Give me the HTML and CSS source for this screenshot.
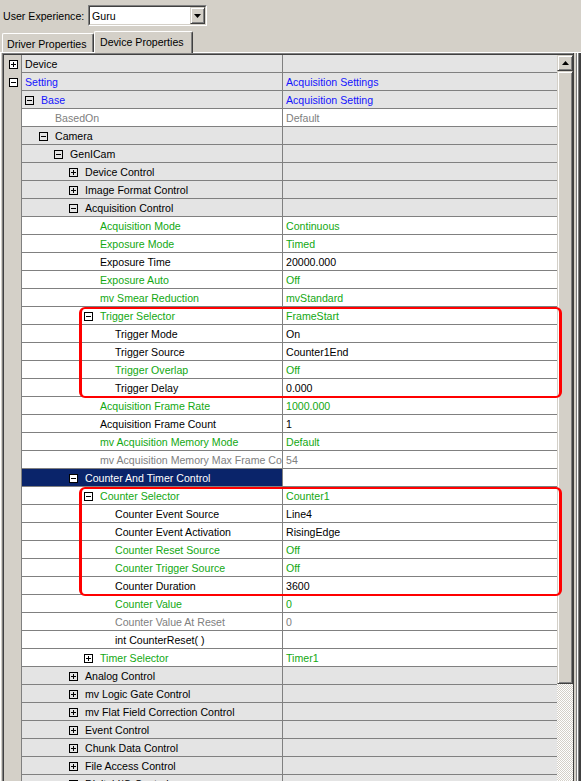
FILE: index.html
```html
<!DOCTYPE html>
<html>
<head>
<meta charset="utf-8">
<link rel="stylesheet" href="styles.css">
</head>
<body>
<div class="top">
  <div class="label">User Experience:</div>
  <div class="combo"><div class="combo-in"><span class="combo-text">Guru</span><span class="drop"><svg width="7" height="4" viewBox="0 0 7 4"><polygon points="0,0 7,0 3.5,4" fill="#000"/></svg></span></div></div>
</div>
<div class="tabs">
  <div class="tab tab1">Driver Properties</div>
  <div class="tab tab2">Device Properties</div>
</div>
<div class="panel">
  <div class="view"><div class="view-in">
    <div class="tree">
      <div class="row cat"><div class="gut"><i class="exp plus"></i></div><div class="nm l0">Device</div><div class="vl"></div></div>
      <div class="row cat"><div class="gut"><i class="exp"></i></div><div class="nm l0 b">Setting</div><div class="vl b">Acquisition Settings</div></div>
      <div class="row cat"><div class="gut"></div><div class="nm e1 b"><i class="exp"></i>Base</div><div class="vl b">Acquisition Setting</div></div>
      <div class="row"><div class="gut"></div><div class="nm l2 gr">BasedOn</div><div class="vl gr">Default</div></div>
      <div class="row cat"><div class="gut"></div><div class="nm e2"><i class="exp"></i>Camera</div><div class="vl"></div></div>
      <div class="row cat"><div class="gut"></div><div class="nm e3"><i class="exp"></i>GenICam</div><div class="vl"></div></div>
      <div class="row cat"><div class="gut"></div><div class="nm e4"><i class="exp plus"></i>Device Control</div><div class="vl"></div></div>
      <div class="row cat"><div class="gut"></div><div class="nm e4"><i class="exp plus"></i>Image Format Control</div><div class="vl"></div></div>
      <div class="row cat"><div class="gut"></div><div class="nm e4"><i class="exp"></i>Acquisition Control</div><div class="vl"></div></div>
      <div class="row"><div class="gut"></div><div class="nm l5 g">Acquisition Mode</div><div class="vl g">Continuous</div></div>
      <div class="row"><div class="gut"></div><div class="nm l5 g">Exposure Mode</div><div class="vl g">Timed</div></div>
      <div class="row"><div class="gut"></div><div class="nm l5">Exposure Time</div><div class="vl">20000.000</div></div>
      <div class="row"><div class="gut"></div><div class="nm l5 g">Exposure Auto</div><div class="vl g">Off</div></div>
      <div class="row"><div class="gut"></div><div class="nm l5 g">mv Smear Reduction</div><div class="vl g">mvStandard</div></div>
      <div class="hl">
        <div class="row"><div class="gut"></div><div class="nm e5 g"><i class="exp"></i>Trigger Selector</div><div class="vl g">FrameStart</div></div>
        <div class="row"><div class="gut"></div><div class="nm l6">Trigger Mode</div><div class="vl">On</div></div>
        <div class="row"><div class="gut"></div><div class="nm l6">Trigger Source</div><div class="vl">Counter1End</div></div>
        <div class="row"><div class="gut"></div><div class="nm l6 g">Trigger Overlap</div><div class="vl g">Off</div></div>
        <div class="row"><div class="gut"></div><div class="nm l6">Trigger Delay</div><div class="vl">0.000</div></div>
      </div>
      <div class="row"><div class="gut"></div><div class="nm l5 g">Acquisition Frame Rate</div><div class="vl g">1000.000</div></div>
      <div class="row"><div class="gut"></div><div class="nm l5">Acquisition Frame Count</div><div class="vl">1</div></div>
      <div class="row"><div class="gut"></div><div class="nm l5 g">mv Acquisition Memory Mode</div><div class="vl g">Default</div></div>
      <div class="row"><div class="gut"></div><div class="nm l5 gr">mv Acquisition Memory Max Frame Count</div><div class="vl gr">54</div></div>
      <div class="row sel"><div class="gut"></div><div class="nm e4"><i class="exp"></i>Counter And Timer Control</div><div class="vl"></div></div>
      <div class="hl">
        <div class="row"><div class="gut"></div><div class="nm e5 g"><i class="exp"></i>Counter Selector</div><div class="vl g">Counter1</div></div>
        <div class="row"><div class="gut"></div><div class="nm l6">Counter Event Source</div><div class="vl">Line4</div></div>
        <div class="row"><div class="gut"></div><div class="nm l6">Counter Event Activation</div><div class="vl">RisingEdge</div></div>
        <div class="row"><div class="gut"></div><div class="nm l6 g">Counter Reset Source</div><div class="vl g">Off</div></div>
        <div class="row"><div class="gut"></div><div class="nm l6 g">Counter Trigger Source</div><div class="vl g">Off</div></div>
        <div class="row"><div class="gut"></div><div class="nm l6">Counter Duration</div><div class="vl">3600</div></div>
      </div>
      <div class="row"><div class="gut"></div><div class="nm l6 g">Counter Value</div><div class="vl g">0</div></div>
      <div class="row"><div class="gut"></div><div class="nm l6 gr">Counter Value At Reset</div><div class="vl gr">0</div></div>
      <div class="row"><div class="gut"></div><div class="nm l6">int CounterReset( )</div><div class="vl"></div></div>
      <div class="row"><div class="gut"></div><div class="nm e5 g"><i class="exp plus"></i>Timer Selector</div><div class="vl g">Timer1</div></div>
      <div class="row cat"><div class="gut"></div><div class="nm e4"><i class="exp plus"></i>Analog Control</div><div class="vl"></div></div>
      <div class="row cat"><div class="gut"></div><div class="nm e4"><i class="exp plus"></i>mv Logic Gate Control</div><div class="vl"></div></div>
      <div class="row cat"><div class="gut"></div><div class="nm e4"><i class="exp plus"></i>mv Flat Field Correction Control</div><div class="vl"></div></div>
      <div class="row cat"><div class="gut"></div><div class="nm e4"><i class="exp plus"></i>Event Control</div><div class="vl"></div></div>
      <div class="row cat"><div class="gut"></div><div class="nm e4"><i class="exp plus"></i>Chunk Data Control</div><div class="vl"></div></div>
      <div class="row cat"><div class="gut"></div><div class="nm e4"><i class="exp plus"></i>File Access Control</div><div class="vl"></div></div>
      <div class="row cat"><div class="gut"></div><div class="nm e4"><i class="exp plus"></i>Digital I/O Control</div><div class="vl"></div></div>
    </div>
    <div class="vscroll">
      <div class="sb-btn"><svg width="7" height="4" viewBox="0 0 7 4"><polygon points="3.5,0 7,4 0,4" fill="#000"/></svg></div>
      <div class="sb-thumb"></div>
      <div class="sb-track"></div>
    </div>
  </div></div>
  <div class="frame-r"></div>
</div>
</body>
</html>
```
FILE: styles.css
```css
html, body {
  margin: 0;
  height: 781px;
  overflow: hidden;
}
body {
  background: #d4d0c8;
  font-family: "Liberation Sans", Arial, sans-serif;
  font-size: 10.6px;
  color: #000;
}
.top {
  display: flex;
  align-items: center;
  height: 21px;
  padding: 5px 0 5px 3px;
}
.label {
  width: 85px;
  flex: none;
}
.combo {
  width: 119px;
  height: 21px;
  box-sizing: border-box;
  border: 1px solid;
  border-color: #808080 #fff #fff #808080;
  display: flex;
}
.combo-in {
  flex: 1;
  display: flex;
  align-items: center;
  justify-content: space-between;
  border: 1px solid;
  border-color: #404040 #d4d0c8 #d4d0c8 #404040;
  background: #fff;
}
.combo-text {
  padding-left: 2px;
}
.drop {
  width: 15px;
  height: 17px;
  box-sizing: border-box;
  background: #d4d0c8;
  border: 1px solid;
  border-color: #d4d0c8 #404040 #404040 #d4d0c8;
  box-shadow: inset 1px 1px #fff, inset -1px -1px #808080;
  display: flex;
  align-items: center;
  justify-content: center;
}
.drop svg, .sb-btn svg {
  display: block;
}
.tabs {
  display: flex;
  align-items: flex-end;
  height: 21px;
  padding-left: 2px;
  position: relative;
  z-index: 1;
}
.tab {
  box-sizing: border-box;
  height: 19px;
  border-left: 1px solid #fff;
  border-top: 1px solid #fff;
  border-right: 1px solid #404040;
  box-shadow: inset -1px 0 #808080;
  border-radius: 2px 2px 0 0;
  display: flex;
  align-items: center;
  padding-left: 4px;
  padding-top: 1px;
  background: #d4d0c8;
}
.tab1 {
  width: 92px;
}
.tab2 {
  width: 99px;
  height: 22px;
  margin-bottom: -1px;
  padding-left: 5px;
  padding-top: 0;
  padding-bottom: 2px;
}
.panel {
  display: flex;
  border-top: 1px solid #fff;
  border-left: 1px solid #fff;
  padding-left: 1px;
}
.view {
  border-top: 1px solid #808080;
  border-left: 1px solid #808080;
}
.view-in {
  display: flex;
  border-top: 1px solid #404040;
  border-left: 1px solid #404040;
}
.tree {
  width: 553px;
  flex: none;
}
.row {
  display: grid;
  grid-template-columns: 18px 261px 274px;
  height: 18px;
}
.row > div {
  box-sizing: border-box;
  height: 18px;
  display: flex;
  align-items: center;
  white-space: nowrap;
  overflow: hidden;
}
.gut {
  background: #d4d0c8;
  border-right: 1px solid #808080;
  padding-left: 5px;
}
.nm {
  background: #fff;
  border-right: 1px solid #808080;
  border-bottom: 1px solid #808080;
}
.vl {
  background: #fff;
  border-bottom: 1px solid #808080;
  padding-left: 3px;
}
.cat .nm, .cat .vl {
  background: #e4e4e4;
}
.sel .nm {
  background: #0a246a;
  color: #fff;
}
.l0 { padding-left: 3px; }
.l2 { padding-left: 33px; }
.l5 { padding-left: 78px; }
.l6 { padding-left: 93px; }
.e1 { padding-left: 3px; }
.e2 { padding-left: 17px; }
.e3 { padding-left: 32px; }
.e4 { padding-left: 47px; }
.e5 { padding-left: 62px; }
.b { color: #1414ff; }
.g { color: #12a812; }
.gr { color: #808080; }
.exp {
  flex: none;
  width: 9px;
  height: 9px;
  box-sizing: border-box;
  border: 1px solid #000;
  position: relative;
  margin-right: 7px;
  margin-top: 1px;
}
.gut .exp, .sel .exp {
  background: #fff;
}
.exp::before {
  content: "";
  position: absolute;
  left: 1px;
  top: 3px;
  width: 5px;
  height: 1px;
  background: #000;
}
.exp.plus::after {
  content: "";
  position: absolute;
  left: 3px;
  top: 1px;
  width: 1px;
  height: 5px;
  background: #000;
}
.hl {
  position: relative;
}
.hl::after {
  content: "";
  position: absolute;
  left: 75px;
  top: 0;
  bottom: -1px;
  width: 483px;
  box-sizing: border-box;
  border: 2px solid #f00;
  border-left-width: 3px;
  border-right-width: 3px;
  border-radius: 6px;
  z-index: 3;
  pointer-events: none;
}
.vscroll {
  width: 16px;
  flex: none;
  height: 726px;
  display: flex;
  flex-direction: column;
}
.sb-btn, .sb-thumb {
  box-sizing: border-box;
  background: #d4d0c8;
  border: 1px solid;
  border-color: #d4d0c8 #404040 #404040 #d4d0c8;
  box-shadow: inset 1px 1px #fff, inset -1px -1px #808080;
}
.sb-btn {
  height: 16px;
  display: flex;
  align-items: center;
  justify-content: center;
}
.sb-thumb {
  height: 613px;
}
.sb-track {
  flex: 1;
  background: repeating-conic-gradient(#d4d0c8 0 25%, #fff 0 50%) 0 0 / 2px 2px;
}
.frame-r {
  width: 8px;
  flex: none;
  background: linear-gradient(to right, #404040 0 1px, #d4d0c8 1px 3px, #808080 3px 4px, #fff 4px 5px, #808080 5px 6px, #404040 6px 8px);
}
```
